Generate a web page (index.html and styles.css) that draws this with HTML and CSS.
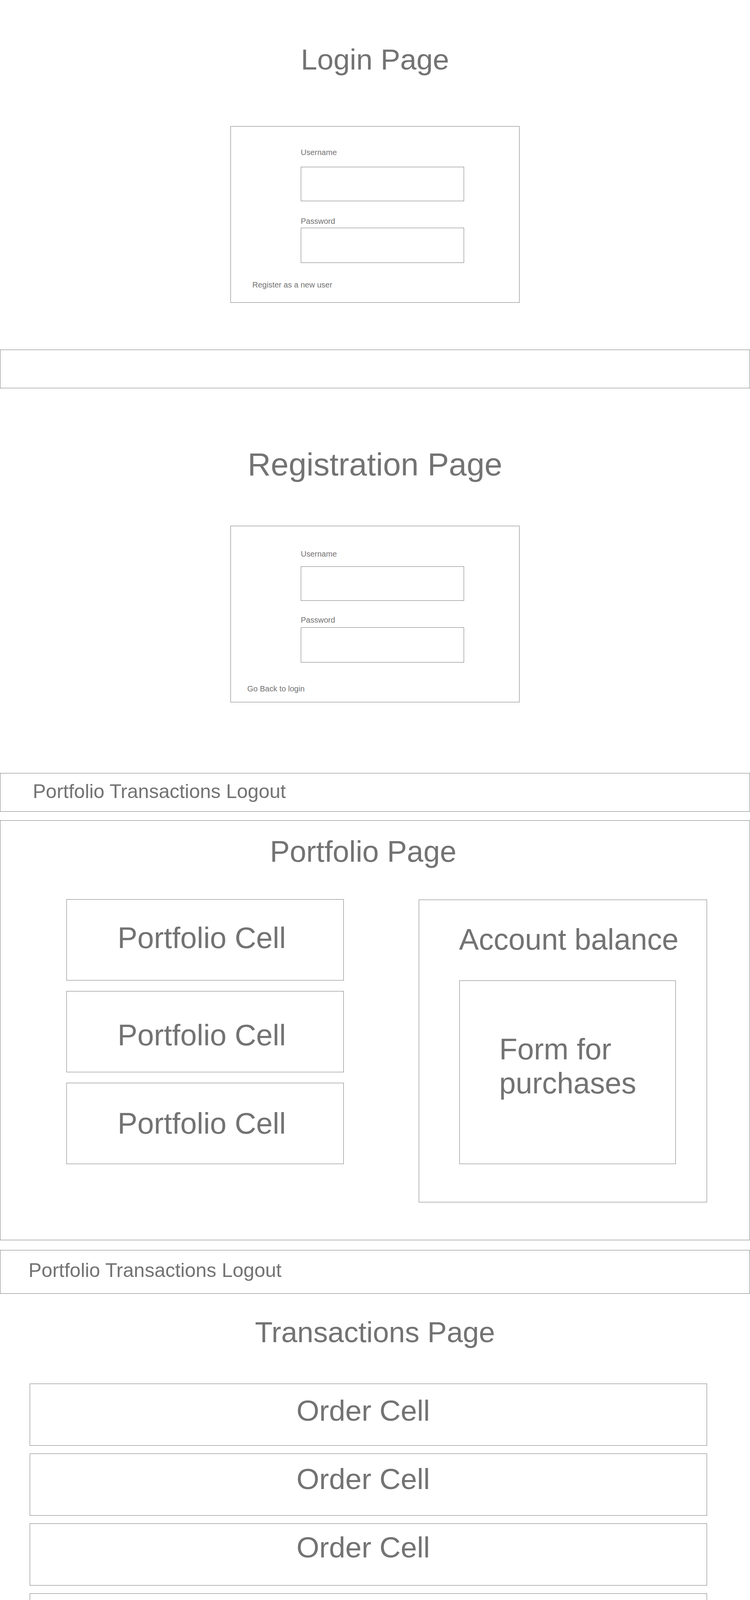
FILE: index.html
```html
<!DOCTYPE html>
<html lang="en">
<head>
<meta charset="utf-8">
<title>Stock Trading Wireframes</title>
<link rel="stylesheet" href="styles.css">
</head>
<body>
<section class="screen screen--login">
  <h1 class="title title--login">Login Page</h1>
  <form class="auth-box auth-box--login">
    <div class="fields">
      <label class="field-label">Username</label>
      <input class="field-input field-input--user" type="text">
      <label class="field-label field-label--pass">Password</label>
      <input class="field-input field-input--pass" type="password">
    </div>
    <a class="auth-link">Register as a new user</a>
  </form>
</section>

<div class="empty-bar"></div>

<section class="screen screen--register">
  <h1 class="title title--register">Registration Page</h1>
  <form class="auth-box auth-box--register">
    <div class="fields">
      <label class="field-label">Username</label>
      <input class="field-input field-input--user" type="text">
      <label class="field-label field-label--pass">Password</label>
      <input class="field-input field-input--pass" type="password">
    </div>
    <a class="auth-link">Go Back to login</a>
  </form>
</section>

<nav class="nav-bar nav-bar--first">
  <a class="nav-link">Portfolio</a> <a class="nav-link">Transactions</a> <a class="nav-link">Logout</a>
</nav>

<section class="portfolio">
  <h1 class="title title--portfolio">Portfolio Page</h1>
  <div class="portfolio-grid">
    <div class="holdings">
      <div class="holding-cell">Portfolio Cell</div>
      <div class="holding-cell">Portfolio Cell</div>
      <div class="holding-cell">Portfolio Cell</div>
    </div>
    <div class="account">
      <h2 class="account-title">Account balance</h2>
      <div class="purchase-form">Form for<br>purchases</div>
    </div>
  </div>
</section>

<nav class="nav-bar nav-bar--second">
  <a class="nav-link">Portfolio</a> <a class="nav-link">Transactions</a> <a class="nav-link">Logout</a>
</nav>

<section class="screen screen--transactions">
  <h1 class="title title--transactions">Transactions Page</h1>
  <div class="orders">
    <div class="order-cell">Order Cell</div>
    <div class="order-cell">Order Cell</div>
    <div class="order-cell">Order Cell</div>
    <div class="order-cell">Order Cell</div>
    <div class="order-cell">Order Cell</div>
  </div>
</section>
</body>
</html>
```

FILE: styles.css
```css
* {
  box-sizing: border-box;
}

html,
body {
  margin: 0;
  padding: 0;
  background: #ffffff;
}

body {
  width: 1920px;
  font-family: "Liberation Sans", Arial, Helvetica, sans-serif;
  color: #737373;
}

.screen--login {
  padding-top: 115px;
}

.title {
  margin: 0;
  font-weight: 400;
  line-height: 1;
  white-space: nowrap;
}

.title--login {
  font-size: 75px;
  height: 75px;
  text-align: center;
}

.title--register {
  font-size: 82px;
  height: 82px;
  margin-top: 154px;
  text-align: center;
}

.title--portfolio {
  font-size: 76px;
  height: 76px;
  padding-left: 690px;
}

.title--transactions {
  font-size: 74px;
  height: 74px;
  margin-top: 62px;
  text-align: center;
}

/* login / registration boxes */
.auth-box {
  display: flex;
  flex-direction: column;
  align-items: flex-start;
  width: 740px;
  height: 452px;
  margin-left: auto;
  margin-right: auto;
  border: 1px solid #777777;
}

.auth-box--login {
  margin-top: 133px;
  padding-top: 56px;
}

.auth-box--register {
  margin-top: 116px;
  padding-top: 61px;
}

.fields {
  display: flex;
  flex-direction: column;
  align-items: flex-start;
  padding-left: 179px;
}

.field-label {
  display: block;
  height: 20px;
  font-size: 20px;
  line-height: 20px;
}

.field-input {
  display: block;
  width: 418px;
  margin: 0;
  padding: 0;
  border: 1px solid #777777;
  border-radius: 0;
  background: #ffffff;
  outline: none;
  font: inherit;
}

.field-input--user {
  height: 88px;
}

.field-input--pass {
  height: 90px;
}

.auth-box--login .field-input--user { margin-top: 27px; }
.auth-box--login .field-label--pass { margin-top: 41px; }
.auth-box--login .field-input--pass { margin-top: 7px; }

.auth-box--register .field-input--user { margin-top: 22px; }
.auth-box--register .field-label--pass { margin-top: 39px; }
.auth-box--register .field-input--pass { margin-top: 9px; }

.auth-link {
  display: block;
  height: 20px;
  font-size: 20px;
  line-height: 20px;
  color: #737373;
  text-decoration: none;
  white-space: nowrap;
}

.auth-box--login .auth-link {
  margin-top: 46px;
  margin-left: 55px;
}

.auth-box--register .auth-link {
  margin-top: 57px;
  margin-left: 42px;
}

/* bars */
.empty-bar {
  height: 99px;
  margin-top: 120px;
  border: 1px solid #777777;
}

.nav-bar {
  border: 1px solid #777777;
  font-size: 50px;
  line-height: 1;
  white-space: nowrap;
}

.nav-bar--first {
  height: 99px;
  margin-top: 181px;
  padding: 21px 0 0 83px;
}

.nav-bar--second {
  height: 112px;
  margin-top: 25px;
  padding: 26px 0 0 72px;
}

.nav-link {
  color: #737373;
  text-decoration: none;
}

/* portfolio page */
.portfolio {
  height: 1075px;
  margin-top: 22px;
  padding-top: 41px;
  border: 1px solid #777777;
}

.portfolio-grid {
  display: grid;
  grid-template-columns: 710px 738px;
  column-gap: 192px;
  align-items: start;
  margin-top: 84px;
  padding-left: 169px;
}

.holdings {
  display: flex;
  flex-direction: column;
  gap: 27px;
}

.holding-cell {
  height: 208px;
  padding-left: 130px;
  border: 1px solid #777777;
  font-size: 76px;
  line-height: 1;
  white-space: nowrap;
}

.holding-cell:nth-child(1) { padding-top: 60px; }
.holding-cell:nth-child(2) { padding-top: 74px; }
.holding-cell:nth-child(3) { padding-top: 65px; }

.account {
  height: 775px;
  margin-top: 1px;
  padding: 63px 0 0 102px;
  border: 1px solid #777777;
}

.account-title {
  margin: 0;
  font-size: 76px;
  font-weight: 400;
  line-height: 1;
  white-space: nowrap;
}

.purchase-form {
  width: 554px;
  height: 470px;
  margin-top: 67px;
  margin-left: 1px;
  padding: 131px 0 0 101px;
  border: 1px solid #777777;
  font-size: 76px;
  line-height: 87px;
  white-space: nowrap;
}

/* transactions page */
.orders {
  display: flex;
  flex-direction: column;
  gap: 20px;
  margin-top: 94px;
  padding-left: 76px;
}

.order-cell {
  width: 1734px;
  height: 159px;
  padding-left: 682px;
  border: 1px solid #777777;
  font-size: 75px;
  line-height: 1;
  white-space: nowrap;
}

.order-cell:nth-child(1) { padding-top: 31px; }
.order-cell:nth-child(2) { padding-top: 27px; }
.order-cell:nth-child(3) { padding-top: 23px; }
.order-cell:nth-child(4) { padding-top: 29px; }
.order-cell:nth-child(5) { padding-top: 34px; }
```
